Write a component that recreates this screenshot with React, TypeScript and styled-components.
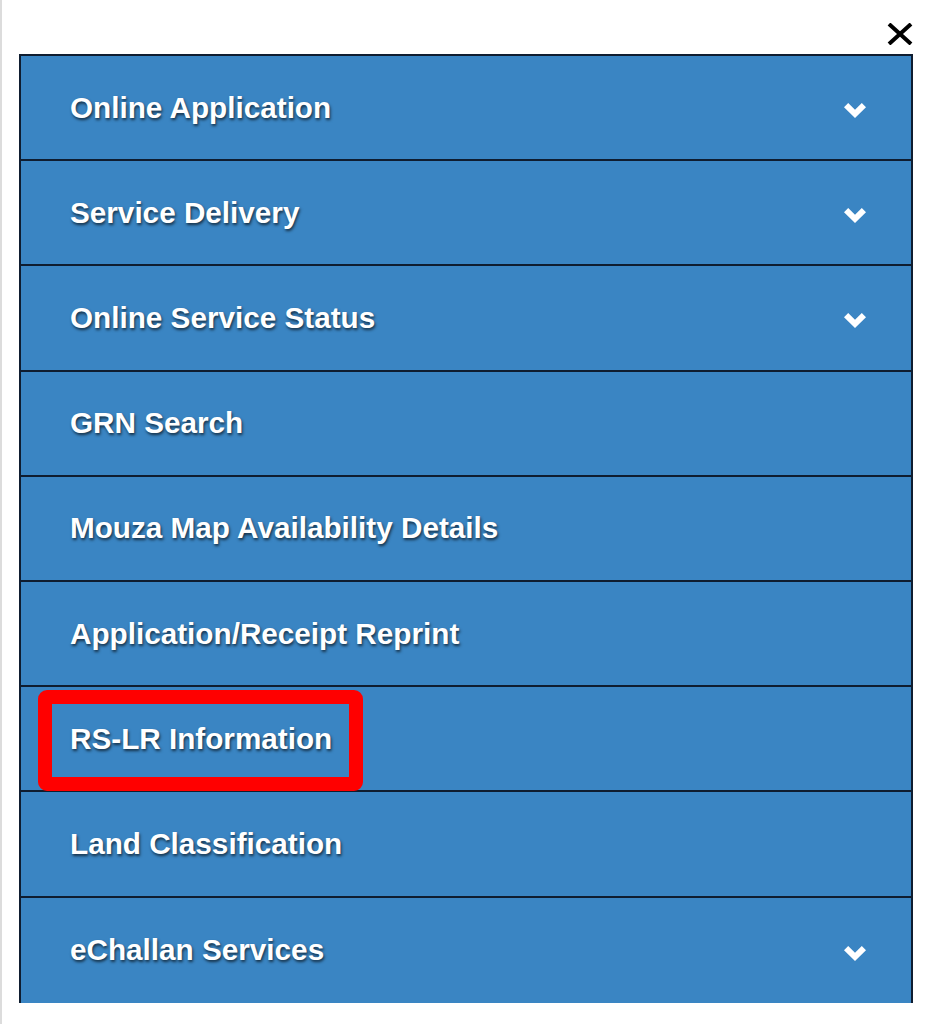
import React from "react";
import styled, { createGlobalStyle } from "styled-components";

const GlobalStyle = createGlobalStyle`
  html, body {
    margin: 0;
    padding: 0;
    background: #ffffff;
    font-family: "Liberation Sans", Arial, sans-serif;
  }
`;

const Page = styled.div`
  box-sizing: border-box;
  width: 932px;
  height: 1024px;
  border-left: 2px solid #dcdcdc;
  padding-left: 17px;
  overflow: hidden;
`;

const Sheet = styled.div`
  width: 894px;
  display: flex;
  flex-direction: column;
`;

const TopBar = styled.div`
  height: 54px;
  display: flex;
  justify-content: flex-end;
  align-items: flex-start;
`;

const CloseButton = styled.button`
  border: none;
  background: transparent;
  padding: 0;
  margin: 22px -1px 0 0;
  width: 28px;
  height: 24px;
  display: flex;
  align-items: center;
  justify-content: center;
  cursor: pointer;
`;

const Panel = styled.ul`
  list-style: none;
  margin: 0;
  padding: 0;
  background: #3a85c3;
  border-top: 2px solid #0f1d30;
  border-left: 2px solid #0f1d30;
  border-right: 2px solid #0f1d30;
  box-sizing: border-box;
`;

const Row = styled.li<{ $last?: boolean }>`
  position: relative;
  box-sizing: border-box;
  height: 105.2px;
  display: flex;
  align-items: center;
  justify-content: space-between;
  padding: 0 45px 0 49px;
  border-bottom: ${(p) => (p.$last ? "none" : "2px solid #0f1d30")};
`;

const Label = styled.span`
  color: #ffffff;
  font-weight: 700;
  font-size: 29.7px;
  letter-spacing: 0;
  text-shadow: 1px 2px 3px rgba(0, 0, 0, 0.65);
`;

const ChevronWrap = styled.span`
  display: flex;
  margin-top: 6px;
`;

const Highlight = styled.div`
  position: absolute;
  left: 17px;
  top: 3px;
  width: 325px;
  height: 101px;
  box-sizing: border-box;
  border: 14px solid #ff0000;
  border-radius: 9px;
  pointer-events: none;
`;

const Chevron = () => (
  <ChevronWrap>
    <svg width="22" height="15" viewBox="0 0 22 15" aria-hidden="true">
      <path d="M0 4.2 L4.2 0 L11 6.8 L17.8 0 L22 4.2 L11 15 Z" fill="#ffffff" />
    </svg>
  </ChevronWrap>
);

const CloseIcon = () => (
  <svg width="26" height="22" viewBox="0 0 26 22" aria-hidden="true">
    <path d="M2 1 L24 21 M24 1 L2 21" stroke="#000" strokeWidth="4" strokeLinecap="butt" />
  </svg>
);

const items: { label: string; sub?: boolean; highlight?: boolean }[] = [
  { label: "Online Application", sub: true },
  { label: "Service Delivery", sub: true },
  { label: "Online Service Status", sub: true },
  { label: "GRN Search" },
  { label: "Mouza Map Availability Details" },
  { label: "Application/Receipt Reprint" },
  { label: "RS-LR Information", highlight: true },
  { label: "Land Classification" },
  { label: "eChallan Services", sub: true },
];

export default function App() {
  return (
    <>
      <GlobalStyle />
      <Page>
        <Sheet>
          <TopBar>
            <CloseButton aria-label="Close">
              <CloseIcon />
            </CloseButton>
          </TopBar>
          <Panel>
            {items.map((it, i) => (
              <Row key={it.label} $last={i === items.length - 1}>
                <Label>{it.label}</Label>
                {it.sub && <Chevron />}
                {it.highlight && <Highlight />}
              </Row>
            ))}
          </Panel>
        </Sheet>
      </Page>
    </>
  );
}
